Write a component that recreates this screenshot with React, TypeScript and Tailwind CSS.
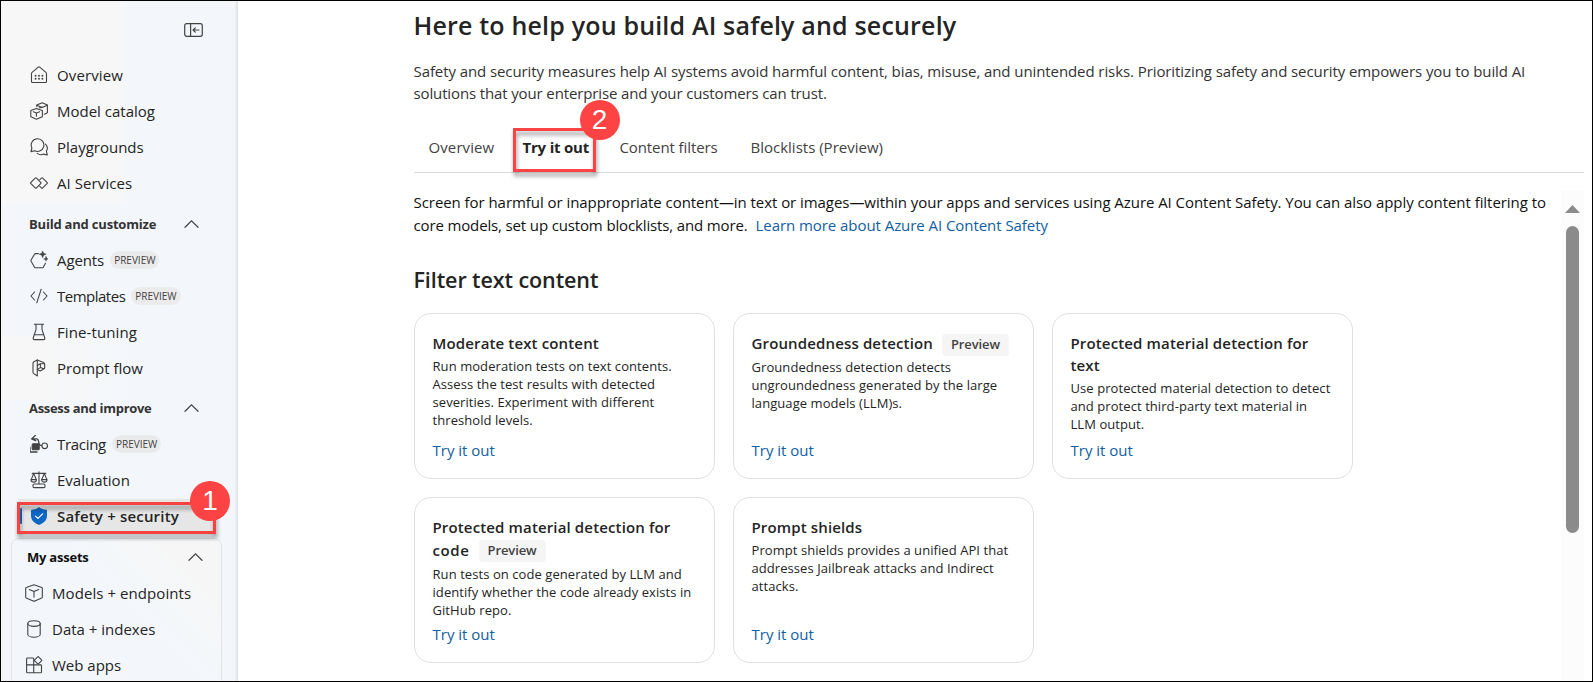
import type { ReactNode } from "react";

function Icon({ children }: { children: ReactNode }) {
  return (
    <svg
      className="h-[18px] w-[18px] shrink-0"
      viewBox="0 0 18 18"
      fill="none"
      stroke="#424242"
      strokeWidth="1.1"
      strokeLinecap="round"
      strokeLinejoin="round"
    >
      {children}
    </svg>
  );
}

const HomeIcon = () => (
  <Icon>
    <path d="M1.5 15.5V7.6c0-.5.2-.9.6-1.2L8.3 1.1c.4-.3 1-.3 1.4 0l6.2 5.3c.4.3.6.7.6 1.2v7.9c0 .6-.4 1-1 1h-13c-.6 0-1-.4-1-1Z" />
    <g fill="#424242" stroke="none">
      <circle cx="5.6" cy="9.8" r=".95" />
      <circle cx="9" cy="9.8" r=".95" />
      <circle cx="12.4" cy="9.8" r=".95" />
      <circle cx="5.6" cy="12.8" r=".95" />
      <circle cx="9" cy="12.8" r=".95" />
      <circle cx="12.4" cy="12.8" r=".95" />
    </g>
  </Icon>
);

const CatalogIcon = () => (
  <Icon>
    <path d="M.8 8.6 6.4 6.4l6 2.2v6.2l-6 2.5-5.6-2.5V8.6Z" />
    <path d="M3.4 9.8l3 1.3 3.2-1.3M6.4 11.1v3.2" />
    <path d="M6.8 4.4V3l5.4-2.2L17.4 3v7.8l-3 1.4" />
    <path d="M6.8 3.2l5.4 2.2 5.1-2.2M9.3 5.8l2.9-.4" />
  </Icon>
);

const ChatIcon = () => (
  <Icon>
    <path d="M7.6.8a6.3 6.3 0 1 1-2.9 11.9L1 13.6l.9-3.6A6.3 6.3 0 0 1 7.6.8Z" />
    <path d="M15.5 6.2a5.8 5.8 0 0 1 .9 7l.9 3.8-3.8-.9a6.2 6.2 0 0 1-6.2-.7" />
  </Icon>
);

const ServicesIcon = () => (
  <Icon>
    <path d="M5.2 4.1.9 8.4c-.4.4-.4.9 0 1.3l4.3 4.2c.4.4.9.4 1.3 0l4.2-4.2c.4-.4.4-.9 0-1.3L6.5 4.1c-.4-.4-.9-.4-1.3 0Z" />
    <path d="M9.8 5.6l1.6-1.5c.4-.4.9-.4 1.3 0l4.3 4.3c.4.4.4.9 0 1.3l-4.3 4.2c-.4.4-.9.4-1.3 0l-1.6-1.5" />
  </Icon>
);

const AgentsIcon = () => (
  <Icon>
    <path d="M8.4 2.6H5.6c-.5 0-.9.2-1.1.6L1.1 9.1c-.2.4-.2.8 0 1.2l3.4 5.9c.2.4.6.6 1.1.6h6.6c.5 0 .9-.2 1.1-.6l2.2-3.9" />
    <path
      d="M12.6-.2l1 2.5 2.5.9-2.5 1-1 2.5-.9-2.5-2.5-1 2.5-.9ZM16 5.6l.6 1.7 1.6.6-1.6.6-.6 1.7-.6-1.7-1.7-.6 1.7-.6Z"
      fill="#424242"
      strokeWidth=".5"
    />
  </Icon>
);

const CodeIcon = () => (
  <Icon>
    <path d="M4.6 5 .9 9l3.7 4M13.4 5l3.7 4-3.7 4M11.2 2.2 6.8 15.8" />
  </Icon>
);

const FlaskIcon = () => (
  <Icon>
    <path d="M4.4 1.2h9.2M6 1.2v5.4L3.2 15c-.2.8.2 1.6 1.1 1.6h9.4c.9 0 1.3-.8 1.1-1.6L12 6.6V1.2M4.5 11.7h9" />
  </Icon>
);

const FlowIcon = () => (
  <Icon>
    <path d="M7.3.9 3.9 2.8c-.6.3-.9.9-.9 1.5v8.9c0 .6.3 1.1.8 1.4l3.5 2.4V.9Z" />
    <path d="M7.3 1l6.200 2.500c.7.300 1.200.900 1.200 1.700v3.300c0 .6-.4 1.200-1 1.500l-3.500 2-2.900-1.500" />
    <path d="M7.3 6.4l3.100-1.700 4 .1M10.400 4.900v3.700L7.400 10.400M10.400 8.600l3.300 1.200" />
  </Icon>
);

const TracingIcon = () => (
  <Icon>
    <path d="M5.3.6 1.6 3.9 5.7 5.7M1.8 3.9h4.7c2.6 0 1.6 3.2 3 5.6.5.9 1 1.1 1.9 1.1" strokeWidth="1.3" />
    <rect x="2.2" y="8.8" width="7" height="6" rx="1" fill="#424242" />
    <circle cx="14.7" cy="10.8" r="2.8" />
    <path d="M0 12.5v3.5c0 .6.4 1 1 1h6" strokeWidth="1.3" />
  </Icon>
);

const ScaleIcon = () => (
  <Icon>
    <path d="M9 .8v12M2.2 2.4h13.6M3.7 2.5 1.2 8.6h5.2L3.7 2.5ZM14.3 2.5l-2.6 6.1h5.2l-2.6-6.1Z" />
    <path d="M1 8.7a2.7 2.4 0 0 0 5.4 0M11.6 8.7a2.7 2.4 0 0 0 5.4 0" />
    <rect x="3" y="13" width="12" height="3.6" rx="1.2" />
  </Icon>
);

const ShieldIcon = () => (
  <svg className="h-[18px] w-[18px] shrink-0" viewBox="0 0 18 18" fill="none">
    <path
      d="M8.5.4c.3-.2.7-.2 1 0 2 1.4 4.2 2.2 6.7 2.4.5 0 .8.4.8.8v4.900c0 4.200-2.500 7.200-7.500 9.200-.3.100-.7.100-1 0C3.500 15.700 1 12.700 1 8.500V3.600c0-.4.300-.8.8-.8C4.300 2.600 6.500 1.800 8.500.4Z"
      fill="#0f67c4"
    />
    <path d="M5.5 9.1 8 11.4l4.6-4.6" stroke="#fff" strokeWidth="1.2" strokeLinecap="round" strokeLinejoin="round" />
  </svg>
);

const CubeIcon = () => (
  <Icon>
    <path d="M8.2 1 1.3 3.5c-.4.2-.6.5-.6.9v8.8c0 .4.2.7.6.9L8.2 17c.5.2 1.1.2 1.6 0l6.9-2.9c.4-.2.6-.5.6-.9V4.4c0-.4-.2-.7-.6-.9L9.8 1a2 2 0 0 0-1.6 0Z" />
    <path d="M4.3 5.5 9 7.5l4.7-2M9 7.5v5.6" />
  </Icon>
);

const DatabaseIcon = () => (
  <Icon>
    <ellipse cx="9" cy="3.6" rx="6.2" ry="2.8" />
    <path d="M2.8 3.6v10.8c0 1.5 2.8 2.8 6.2 2.8s6.2-1.3 6.2-2.8V3.6" />
  </Icon>
);

const AppsIcon = () => (
  <Icon>
    <path d="M8.7 8.9v7.9M8.7 2.9v6M1.6 8.9h14c.5 0 .9.4.9.9v6.1c0 .5-.4.9-.9.9H2.5c-.5 0-.9-.4-.9-.9V2.9c0-.5.4-.9.9-.9h5.3c.5 0 .9.4.9.9" />
    <path d="M12.6.9 9.7 3.8c-.3.3-.3.7 0 1l2.9 2.9c.3.3.7.3 1 0l2.9-2.9c.3-.3.3-.7 0-1L13.6.9c-.3-.3-.7-.3-1 0Z" />
  </Icon>
);

const Chevron = () => (
  <svg className="h-2 w-[15px]" viewBox="0 0 15 8" fill="none" stroke="#424242" strokeWidth="1.2" strokeLinecap="round">
    <path d="M1 7.3 7.5.9 14 7.3" />
  </svg>
);

function NavItem({ icon, label, spacing = "", preview = false }: { icon: ReactNode; label: string; spacing?: string; preview?: boolean }) {
  return (
    <a className="flex h-9 items-center gap-[9px] pb-[2px] text-[15px] leading-5 text-[#242424]">
      {icon}
      <span className={spacing}>{label}</span>
      {preview && (
        <span className="-ml-[3px] flex h-[18px] items-center rounded-full bg-[#ebebeb] px-1 text-[10px] text-[#424242]">
          PREVIEW
        </span>
      )}
    </a>
  );
}

function NavHeading({ label, className = "" }: { label: string; className?: string }) {
  return (
    <div className={`mb-px flex h-9 items-center justify-between text-[13px] leading-[18px] font-bold ${className}`}>
      <span>{label}</span>
      <Chevron />
    </div>
  );
}

function StepBadge({ step, className }: { step: number; className: string }) {
  return (
    <span
      className={`absolute z-10 flex h-10 w-10 items-center justify-center rounded-full bg-[#fd4343] font-['Liberation_Sans',sans-serif] text-[28px] leading-none font-normal tracking-normal text-white ${className}`}
    >
      {step}
    </span>
  );
}

function Sidebar() {
  return (
    <aside className="flex w-[237px] shrink-0 flex-col overflow-hidden shadow-[inset_-3px_0_2px_-1px_#dfe2e6] [background:linear-gradient(#f7f7f7,#f7f7f7)_0_0/124px_202px_no-repeat,linear-gradient(90deg,#f7f7f7_30%,#f3f7fb)_0_335px/130px_64px_no-repeat,#f3f7fb]">
      <div className="flex h-[57px] shrink-0 items-center justify-end pr-[35px]">
        <svg className="h-[14px] w-[19px]" viewBox="0 0 19 14" fill="none" stroke="#424242" strokeWidth="1.2" strokeLinecap="round" strokeLinejoin="round">
          <rect x=".7" y=".7" width="17.6" height="12.6" rx="2" />
          <path d="M6.6.8v12.4M15 7H9.300M11.300 4.800 9.100 7l2.200 2.200" />
        </svg>
      </div>
      <nav className="shrink-0 pl-[29px]">
        <NavItem icon={<HomeIcon />} label="Overview" spacing="tracking-[0.12px]" />
        <NavItem icon={<CatalogIcon />} label="Model catalog" />
        <NavItem icon={<ChatIcon />} label="Playgrounds" />
        <NavItem icon={<ServicesIcon />} label="AI Services" spacing="tracking-[0.08px]" />
        <NavHeading label="Build and customize" className="mt-1 -ml-px pr-[39px] tracking-[-0.2px] text-[#333]" />
        <NavItem icon={<AgentsIcon />} label="Agents" spacing="tracking-[-0.1px]" preview />
        <NavItem icon={<CodeIcon />} label="Templates" spacing="tracking-[-0.5px]" preview />
        <NavItem icon={<FlaskIcon />} label="Fine-tuning" spacing="tracking-[0.1px]" />
        <NavItem icon={<FlowIcon />} label="Prompt flow" />
        <NavHeading label="Assess and improve" className="mt-[3px] -ml-px pr-[39px] tracking-[-0.3px] text-[#333]" />
        <NavItem icon={<TracingIcon />} label="Tracing" spacing="tracking-[-0.3px]" preview />
        <NavItem icon={<ScaleIcon />} label="Evaluation" />
        <div className="relative mr-[22px] -ml-[12px] bg-[#e6e6e6] pl-[12px]">
          <NavItem icon={<ShieldIcon />} label="Safety + security" spacing="font-semibold tracking-[0.18px]" />
          <span className="absolute top-[3px] -left-px h-8 w-[199px] border-[3px] border-[#f74242] drop-shadow-[1px_4px_2px_rgba(0,0,0,0.4)]" />
          <span className="absolute top-[9px] left-[2px] h-4 w-[2px] rounded bg-[#0f5cad]" />
          <StepBadge step={1} className="-top-[18px] left-[172px]" />
        </div>
      </nav>
      <section className="mt-[3px] mr-4 ml-[10px] h-[200px] shrink-0 rounded-lg border-[1.5px] border-[#e2e3e5] pl-[13px] [background:linear-gradient(225deg,#f6f6f6_15%,#f3f7fb_38%)]">
        <NavHeading label="My assets" className="pr-[18px] pl-[2px] tracking-[-0.22px] text-[#111]" />
        <NavItem icon={<CubeIcon />} label="Models + endpoints" spacing="tracking-[0.07px]" />
        <NavItem icon={<DatabaseIcon />} label="Data + indexes" />
        <NavItem icon={<AppsIcon />} label="Web apps" />
      </section>
    </aside>
  );
}

function PreviewBadge() {
  return (
    <span className="mt-[2px] -mb-px h-[22px] rounded bg-[#f5f5f5] px-[9px] text-[13px] leading-[21px] font-semibold tracking-[-0.1px] text-[#424242]">
      Preview
    </span>
  );
}

function Card({ title, children }: { title: ReactNode; children: ReactNode }) {
  return (
    <article className="flex h-[166px] flex-col justify-between rounded-[17px] border border-[#e0e0e0] bg-white p-[18px] whitespace-nowrap">
      <div>
        <h3 className="text-[15px] leading-[22px] font-semibold tracking-[0.14px]">{title}</h3>
        <p className="mt-[3px] text-[13px] leading-[18px] tracking-[0.07px]">{children}</p>
      </div>
      <a className="text-[15px] leading-5 text-[#115ea3]">Try it out</a>
    </article>
  );
}

export default function App() {
  return (
    <div className="flex h-[682px] w-[1593px] overflow-hidden border border-black bg-white font-['Open_Sans','Noto_Sans',sans-serif] text-[#242424]">
      <Sidebar />
      <main className="flex min-w-0 flex-1 flex-col pl-[175.5px] whitespace-nowrap">
        <h1 className="mt-[7px] text-[25px] leading-[34px] font-semibold tracking-[0.18px]">
          Here to help you build AI safely and securely
        </h1>
        <p className="mt-[18px] text-[15px] leading-[22px] tracking-[-0.085px] text-[#333]">
          Safety and security measures help AI systems avoid harmful content, bias, misuse, and unintended risks. Prioritizing safety and security empowers you to build AI
          <br />
          <span className="tracking-[-0.13px]">solutions that your enterprise and your customers can trust.</span>
        </p>
        <div className="mt-px mr-2 flex h-[68px] shrink-0 border-b border-[#dcdcdc] pt-8 pl-[15px] text-[15px] leading-5 text-[#424242]">
          <span className="w-[94px] tracking-[0.1px]">Overview</span>
          <span className="relative w-[97px] font-bold tracking-[-0.2px] text-[#242424]">
            Try it out
            <span className="absolute -top-[9px] -left-[10px] h-11 w-[83px] border-[3px] border-[#fd4343] drop-shadow-[1px_4px_2px_rgba(0,0,0,0.4)]" />
            <StepBadge step={2} className="-top-[37px] left-[57px]" />
          </span>
          <span className="w-[131px] tracking-[-0.1px]">Content filters</span>
          <span>Blocklists (Preview)</span>
        </div>
        <div className="mt-[18px] mr-2 flex min-h-0 flex-1 justify-between">
          <section>
            <p className="text-[15px] leading-[23px] tracking-[-0.055px] text-[#111]">
              Screen for harmful or inappropriate content—in text or images—within your apps and services using Azure AI Content Safety. You can also apply content filtering to
              <br />
              <span className="tracking-[-0.14px]">core models, set up custom blocklists, and more.</span>
              <a className="ml-2 text-[#115ea3]">Learn more about Azure AI Content Safety</a>
            </p>
            <h2 className="mt-7 text-[21.5px] leading-[30px] font-semibold tracking-[-0.09px]">Filter text content</h2>
            <div className="mt-[18px] grid grid-cols-[repeat(3,301px)] gap-[18px]">
              <Card title="Moderate text content">
                Run moderation tests on text contents.
                <br />
                Assess the test results with detected
                <br />
                severities. Experiment with different
                <br />
                threshold levels.
              </Card>
              <Card
                title={
                  <span className="flex h-[23px] items-start gap-[9px]">
                    Groundedness detection
                    <PreviewBadge />
                  </span>
                }
              >
                Groundedness detection detects
                <br />
                ungroundedness generated by the large
                <br />
                language models (LLM)s.
              </Card>
              <Card
                title={
                  <>
                    Protected material detection for
                    <br />
                    text
                  </>
                }
              >
                Use protected material detection to detect
                <br />
                and protect third-party text material in
                <br />
                LLM output.
              </Card>
              <Card
                title={
                  <>
                    Protected material detection for
                    <span className="flex h-6 items-start gap-[9px]">
                      <span className="pt-px tracking-[0.6px]">code</span>
                      <PreviewBadge />
                    </span>
                  </>
                }
              >
                Run tests on code generated by LLM and
                <br />
                identify whether the code already exists in
                <br />
                GitHub repo.
              </Card>
              <Card title="Prompt shields">
                Prompt shields provides a unified API that
                <br />
                addresses Jailbreak attacks and Indirect
                <br />
                attacks.
              </Card>
            </div>
          </section>
          <div className="flex w-[23px] flex-col items-center bg-[#fcfcfc] pt-[14px]">
            <svg className="h-2 w-[15px]" viewBox="0 0 15 8" fill="#8b8b8b">
              <path d="M7.5 0 15 8H0Z" />
            </svg>
            <div className="mt-[13px] h-[307px] w-[13px] rounded-full bg-[#8b8b8b]" />
          </div>
        </div>
      </main>
    </div>
  );
}
